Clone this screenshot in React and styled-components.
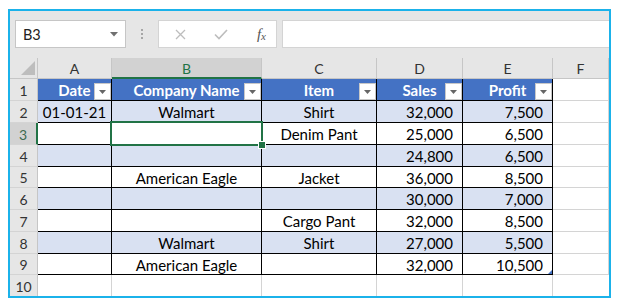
import React from 'react';
import styled, { createGlobalStyle } from 'styled-components';

const GlobalStyle = createGlobalStyle`
  body {
    margin: 0;
    background: #fff;
    font-family: Lato, "Open Sans", sans-serif;
  }
`;

const COLS = ['A', 'B', 'C', 'D', 'E', 'F'];
const HEADERS = ['Date', 'Company Name', 'Item', 'Sales', 'Profit'];
const ROW_HEIGHTS = [22, 22, 22, 22, 21, 22, 22, 22, 21, 21];

const DATA = [
  ['01-01-21', 'Walmart', 'Shirt', '32,000', '7,500'],
  ['', '', 'Denim Pant', '25,000', '6,500'],
  ['', '', '', '24,800', '6,500'],
  ['', 'American Eagle', 'Jacket', '36,000', '8,500'],
  ['', '', '', '30,000', '7,000'],
  ['', '', 'Cargo Pant', '32,000', '8,500'],
  ['', 'Walmart', 'Shirt', '27,000', '5,500'],
  ['', 'American Eagle', '', '32,000', '10,500'],
];

const App = () => {
  return (
    <>
      <GlobalStyle />
      <Frame>
        {/* Name box + formula bar */}
        <Toolbar>
          <NameBox>
            <span>B3</span>
            <svg width="8" height="5" viewBox="0 0 8 5">
              <polygon points="0,0 8,0 4,4.5" fill="#707070" />
            </svg>
          </NameBox>
          <Grip>
            <i /><i /><i />
          </Grip>
          <FxButtons>
            <svg width="11" height="11" viewBox="0 0 11 11">
              <path d="M1 1 L10 10 M10 1 L1 10" stroke="#BDBDBD" strokeWidth="1.3" fill="none" />
            </svg>
            <svg width="14" height="11" viewBox="0 0 14 11">
              <path d="M1 5.5 L5 9.5 L13 1" stroke="#BDBDBD" strokeWidth="1.6" fill="none" />
            </svg>
            <Fx>f<sub>x</sub></Fx>
          </FxButtons>
          <FormulaInput />
        </Toolbar>

        {/* Spreadsheet grid */}
        <Sheet $rows={ROW_HEIGHTS}>
          <Corner>
            <svg width="14" height="14" viewBox="0 0 14 14">
              <polygon points="14,0 14,14 0,14" fill="#BDBDBD" />
            </svg>
          </Corner>
          {COLS.map(c => (
            <ColHead key={c} $selected={c === 'B'}>{c}</ColHead>
          ))}

          <RowHead>1</RowHead>
          {HEADERS.map(h => (
            <HeadCell key={h}>
              {h}
              <FilterButton>
                <svg width="7" height="4" viewBox="0 0 7 4">
                  <polygon points="0,0 7,0 3.5,4" fill="#666" />
                </svg>
              </FilterButton>
            </HeadCell>
          ))}
          <Cell $row={1} />

          {DATA.map((row, i) => {
            const r = i + 2;
            const band = r % 2 === 0;
            return (
              <React.Fragment key={r}>
                <RowHead $selected={r === 3}>{r}</RowHead>
                {row.map((v, j) => (
                  <Cell key={j} $table $band={band} $right={j >= 3} $top={r === 3 && j === 1}>
                    {v}
                    {r === 3 && j === 1 && (
                      <Selection>
                        <FillHandle />
                      </Selection>
                    )}
                    {r === 9 && j === 4 && <ResizeHandle />}
                  </Cell>
                ))}
                <Cell />
              </React.Fragment>
            );
          })}

          <RowHead $last>10</RowHead>
          {COLS.map(c => (
            <Cell key={c} $last />
          ))}
        </Sheet>
      </Frame>
    </>
  );
};

export default App;

/* Outer frame */
const Frame = styled.div`
  box-sizing: border-box;
  margin: 9px 0 0 8px;
  width: 603px;
  height: 289px;
  border: 2px solid #1BB2EA;
  background: #E6E6E6;
  overflow: hidden;
`;

/* Toolbar */
const Toolbar = styled.div`
  height: 47px;
  box-sizing: border-box;
  padding: 9px 0 0 5px;
  display: flex;
  align-items: flex-start;
  background: #E6E6E6;
`;

const NameBox = styled.div`
  box-sizing: border-box;
  width: 111px;
  height: 28px;
  background: #fff;
  border: 1px solid #C6C6C6;
  display: flex;
  align-items: center;
  justify-content: space-between;
  padding: 0 7px 0 7px;
  font-size: 14.5px;
  color: #222;
  svg { margin-top: 1px; }
`;

const Grip = styled.div`
  width: 32px;
  height: 28px;
  display: flex;
  flex-direction: column;
  align-items: center;
  justify-content: center;
  gap: 2px;
  i {
    display: block;
    width: 2px;
    height: 2px;
    background: #A6A6A6;
  }
`;

const FxButtons = styled.div`
  box-sizing: border-box;
  width: 119px;
  height: 28px;
  background: #fff;
  border: 1px solid #D4D4D4;
  display: flex;
  align-items: center;
  justify-content: space-between;
  padding: 0 10px 0 16px;
`;

const Fx = styled.span`
  font-family: "Liberation Serif", serif;
  font-style: italic;
  font-size: 15px;
  color: #555;
  sub {
    font-size: 11px;
    vertical-align: -1px;
  }
`;

const FormulaInput = styled.div`
  box-sizing: border-box;
  flex: 1;
  margin-left: 5px;
  height: 28px;
  background: #fff;
  border: 1px solid #D4D4D4;
  border-right: none;
`;

/* Grid */
const Sheet = styled.div`
  display: grid;
  grid-template-columns: 28px 74px 150px 115px 86px 90px 1fr;
  grid-template-rows: 21px ${p => p.$rows.map(h => `${h}px`).join(' ')};
  background: #fff;
  font-size: 14px;
`;

const Corner = styled.div`
  box-sizing: border-box;
  background: #E6E6E6;
  border-right: 1px solid #C6C6C6;
  border-bottom: 1px solid #C6C6C6;
  display: flex;
  align-items: flex-end;
  justify-content: flex-end;
  padding: 0 2px 3px 0;
`;

const ColHead = styled.div`
  box-sizing: border-box;
  display: flex;
  align-items: center;
  justify-content: center;
  padding-top: 1px;
  background: ${p => (p.$selected ? '#D2D2D2' : '#E6E6E6')};
  color: ${p => (p.$selected ? '#217346' : '#333')};
  border-right: 1px solid #C6C6C6;
  border-bottom: ${p => (p.$selected ? '2px solid #217346' : '1px solid #C6C6C6')};
`;

const RowHead = styled.div`
  box-sizing: border-box;
  display: flex;
  align-items: center;
  justify-content: center;
  padding-top: 1px;
  background: ${p => (p.$selected ? '#D2D2D2' : '#E6E6E6')};
  color: ${p => (p.$selected ? '#3E6B50' : '#333')};
  border-right: ${p => (p.$selected ? '2px solid #217346' : '1px solid #C6C6C6')};
  border-bottom: ${p => (p.$last ? 'none' : '1px solid #D4D4D4')};
`;

const HeadCell = styled.div`
  position: relative;
  box-sizing: border-box;
  display: flex;
  align-items: center;
  justify-content: center;
  padding-top: 1px;
  background: #4472C4;
  color: #fff;
  font-weight: 700;
  font-size: 15px;
  border-right: 1px solid #000;
  border-bottom: 1px solid #000;
`;

const FilterButton = styled.div`
  position: absolute;
  right: 0;
  bottom: 0;
  box-sizing: border-box;
  width: 17px;
  height: 17px;
  background: #fff;
  border: 1px solid #C8C8C8;
  display: flex;
  align-items: center;
  justify-content: center;
`;

const Cell = styled.div`
  position: relative;
  z-index: ${p => (p.$top ? 2 : 'auto')};
  box-sizing: border-box;
  display: flex;
  align-items: center;
  justify-content: ${p => (p.$right ? 'flex-end' : 'center')};
  padding: 1px ${p => (p.$right ? '9px' : '2px')} 0 2px;
  background: ${p => (p.$band ? '#D9E1F2' : '#fff')};
  color: #000;
  font-size: 15px;
  white-space: nowrap;
  border-right: 1px solid ${p => (p.$table ? '#000' : '#D4D4D4')};
  border-bottom: ${p => (p.$last ? 'none' : p.$table ? '1px solid #000' : '1px solid #D4D4D4')};
  &:last-child { border-right: none; }
`;

const Selection = styled.div`
  position: absolute;
  top: -2px;
  left: -2px;
  right: -2px;
  bottom: -2px;
  border: 2px solid #217346;
  pointer-events: none;
`;

const FillHandle = styled.div`
  position: absolute;
  right: -5px;
  bottom: -5px;
  width: 6px;
  height: 6px;
  background: #217346;
  border: 1px solid #fff;
`;

const ResizeHandle = styled.div`
  position: absolute;
  right: 0;
  bottom: 0;
  width: 0;
  height: 0;
  border-left: 4px solid transparent;
  border-bottom: 4px solid #4472C4;
`;
